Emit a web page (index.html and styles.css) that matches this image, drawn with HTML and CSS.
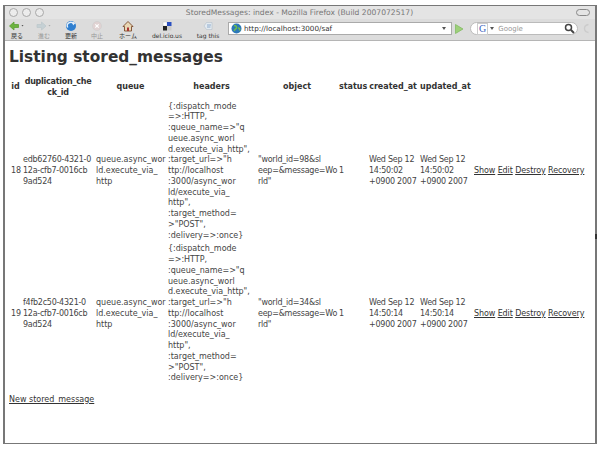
FILE: index.html
```html
<!DOCTYPE html>
<html lang="en">
<head>
    <meta charset="UTF-8">
    <title>StoredMessages: index</title>
    <link rel="stylesheet" href="styles.css">
</head>
<body>

    <div class="window">
        <!-- Title bar -->
        <div class="titlebar">
            <div class="lights">
                <span class="light"></span>
                <span class="light"></span>
                <span class="light"></span>
            </div>
            <div class="window-title">StoredMessages: index - Mozilla Firefox (Build 2007072517)</div>
            <span class="pill"></span>
        </div>

        <!-- Toolbar -->
        <div class="toolbar">
            <div class="tool tool-back">
                <svg width="18" height="12" viewBox="0 0 18 12"><path d="M1.500 6 6 2v2.500h4.500v3H6V10z" fill="#6cb33f" stroke="#5a9e34" stroke-width=".8" stroke-linejoin="round"/><path d="m13.500 5 2 0-1 1.500z" fill="#555"/></svg>
                <span>戻る</span>
            </div>
            <div class="tool tool-forward muted">
                <svg width="18" height="12" viewBox="0 0 18 12"><path d="M11 6 6.500 2v2.500H2v3h4.500V10z" fill="#c5d0d4" stroke="#bcc8cc" stroke-width=".8" stroke-linejoin="round"/><path d="m13.500 5 2 0-1 1.500z" fill="#aaa"/></svg>
                <span>進む</span>
            </div>
            <div class="tool tool-reload">
                <svg width="14" height="12" viewBox="0 0 14 12"><circle cx="7" cy="6" r="5" fill="#2f7fd0"/><path d="M3.800 7.500A3.400 3.400 0 0 1 9.500 3.800" fill="none" stroke="#e6f0fa" stroke-width="1.400"/><path d="M8.500 1.500 11.500 3 9 5.500z" fill="#e6f0fa"/></svg>
                <span>更新</span>
            </div>
            <div class="tool tool-stop muted">
                <svg width="14" height="12" viewBox="0 0 14 12"><circle cx="7" cy="6" r="4.500" fill="#e0d2d2" stroke="#ccc" stroke-width=".6"/><path d="m5.300 4.300 3.400 3.400m0-3.400-3.400 3.400" stroke="#fff" stroke-width="1.200"/></svg>
                <span>中止</span>
            </div>
            <div class="tool tool-home">
                <svg width="14" height="12" viewBox="0 0 14 12"><path d="M7 1.500 2 6.500h1.500V11h7V6.500H12z" fill="#e8d6b4" stroke="#7a4a2a" stroke-width=".9" stroke-linejoin="round"/><path d="M6 7.500h2V11H6z" fill="#a33"/></svg>
                <span>ホーム</span>
            </div>
            <div class="tool tool-delicious">
                <svg width="12" height="12" viewBox="0 0 12 12"><rect x="2" y="2" width="4" height="4" fill="#fff" stroke="#bbb" stroke-width=".4"/><rect x="6" y="2" width="4.500" height="4" fill="#2a4fc0"/><rect x="2" y="6" width="4" height="4.500" fill="#222"/><rect x="6" y="6" width="4.500" height="4.500" fill="#ccc"/></svg>
                <span>del.icio.us</span>
            </div>
            <div class="tool tool-tag">
                <svg width="14" height="12" viewBox="0 0 14 12"><path d="M3 6 5.500 2.500H11v7H5.500z" fill="#e3eaf0" stroke="#b4c0cb" stroke-width=".6"/><path d="M6 5h4M6 7h3.500" stroke="#7a9cc4" stroke-width=".8"/></svg>
                <span>tag this</span>
            </div>
            <div class="urlbar">
                <svg width="11" height="11" viewBox="0 0 11 11"><circle cx="5.500" cy="5.500" r="5" fill="#2c78b8"/><path d="M3 2.500c2 0 3 1 2.500 2.500S3 6 3.500 8M7 5c1.500 0 2 1 1.500 2.500" stroke="#6fc04a" stroke-width="1.500" fill="none"/></svg>
                <span class="url-text">http://localhost:3000/saf</span>
                <span class="url-arrow"></span>
            </div>
            <svg class="go" width="10" height="12" viewBox="0 0 10 12"><path d="M1.500 1.500 9 6l-7.500 4.500z" fill="#9ed07a" stroke="#7ab85a" stroke-width=".7"/></svg>
            <div class="searchbar">
                <span class="engine">G</span>
                <span class="search-arrow"></span>
                <span class="search-text">Google</span>
                <svg class="loupe" width="11" height="11" viewBox="0 0 11 11"><circle cx="4.500" cy="4.500" r="3" fill="none" stroke="#444" stroke-width="1.500"/><path d="m7 7 3 3" stroke="#444" stroke-width="2"/></svg>
            </div>
            <svg class="spinner" width="7" height="11" viewBox="0 0 7 11"><path d="M5.500 1.500C2.500 2 1.500 4 1.500 5.500S2.500 9 5.500 9.500" fill="none" stroke="#ccc" stroke-width="1.400"/></svg>
        </div>

        <!-- Page content -->
        <div class="content">
            <h1>Listing stored_messages</h1>

            <table>
                <colgroup>
                    <col class="col-id">
                    <col class="col-dup">
                    <col class="col-queue">
                    <col class="col-headers">
                    <col class="col-object">
                    <col class="col-status">
                    <col class="col-date">
                    <col class="col-date">
                    <col class="col-actions">
                </colgroup>
                <tr>
                    <th>id</th>
                    <th class="tight">duplication_che<br>ck_id</th>
                    <th>queue</th>
                    <th>headers</th>
                    <th>object</th>
                    <th>status</th>
                    <th>created_at</th>
                    <th>updated_at</th>
                    <th></th>
                </tr>
                <tr>
                    <td>18</td>
                    <td class="tight">edb62760-4321-0<br>12a-cfb7-0016cb<br>9ad524</td>
                    <td>queue.async_wor<br>ld.execute_via_<br>http</td>
                    <td>{:dispatch_mode<br>=&gt;:HTTP,<br>:queue_name=&gt;"q<br>ueue.async_worl<br>d.execute_via_http",<br>:target_url=&gt;"h<br>ttp://localhost<br>:3000/async_wor<br>ld/execute_via_<br>http",<br>:target_method=<br>&gt;"POST",<br>:delivery=&gt;:once}</td>
                    <td class="tight">"world_id=98&amp;sl<br>eep=&amp;message=Wo<br>rld"</td>
                    <td>1</td>
                    <td class="tight">Wed Sep 12<br>14:50:02<br>+0900 2007</td>
                    <td class="tight">Wed Sep 12<br>14:50:02<br>+0900 2007</td>
                    <td class="actions"><a href="#">Show</a> <a href="#">Edit</a> <a href="#">Destroy</a> <a href="#">Recovery</a></td>
                </tr>
                <tr>
                    <td>19</td>
                    <td class="tight">f4fb2c50-4321-0<br>12a-cfb7-0016cb<br>9ad524</td>
                    <td>queue.async_wor<br>ld.execute_via_<br>http</td>
                    <td>{:dispatch_mode<br>=&gt;:HTTP,<br>:queue_name=&gt;"q<br>ueue.async_worl<br>d.execute_via_http",<br>:target_url=&gt;"h<br>ttp://localhost<br>:3000/async_wor<br>ld/execute_via_<br>http",<br>:target_method=<br>&gt;"POST",<br>:delivery=&gt;:once}</td>
                    <td class="tight">"world_id=34&amp;sl<br>eep=&amp;message=Wo<br>rld"</td>
                    <td>1</td>
                    <td class="tight">Wed Sep 12<br>14:50:14<br>+0900 2007</td>
                    <td class="tight">Wed Sep 12<br>14:50:14<br>+0900 2007</td>
                    <td class="actions"><a href="#">Show</a> <a href="#">Edit</a> <a href="#">Destroy</a> <a href="#">Recovery</a></td>
                </tr>
            </table>

            <p class="new-link"><a href="#">New stored_message</a></p>
        </div>

        <span class="edge-mark"></span>
    </div>

</body>
</html>
```
FILE: styles.css
```css
/* General Styling */
html, body {
    height: 100%;
}

body {
    margin: 0;
    padding: 5px 3px 6px 3px;
    box-sizing: border-box;
    background: #fff;
    color: #444;
    font-family: "DejaVu Sans", Verdana, "Noto Sans CJK JP", sans-serif;
}

.window {
    position: relative;
    height: 100%;
    box-sizing: border-box;
    border: 1px solid #777;
    border-left-width: 2px;
    border-right-width: 2px;
    display: flex;
    flex-direction: column;
    background: #fff;
}

.edge-mark {
    position: absolute;
    top: 228px;
    right: -2px;
    width: 2px;
    height: 5px;
    background: #333;
}

/* Title bar */
.titlebar {
    height: 13px;
    display: grid;
    grid-template-columns: 1fr auto 1fr;
    align-items: center;
    padding: 0 5px 0 4px;
    background: #e4e4e4;
}

.lights {
    display: flex;
    gap: 4px;
}

.light {
    width: 9px;
    height: 9px;
    box-sizing: border-box;
    border: 1px solid #a8a8a8;
    border-radius: 50%;
    background: #ececec;
}

.window-title {
    font-size: 7.6px;
    color: #777;
}

.pill {
    justify-self: end;
    width: 12px;
    height: 5px;
    border: 1px solid #888;
    border-radius: 4px;
}

/* Toolbar */
.toolbar {
    height: 22px;
    box-sizing: border-box;
    display: flex;
    align-items: center;
    background: #dcdcdc;
    border-bottom: 1px solid #b5b5b5;
}

.tool {
    display: flex;
    flex-direction: column;
    align-items: center;
    font-size: 6px;
    line-height: 8px;
    color: #333;
}

.tool.muted {
    color: #999;
}

.tool-back { width: 24px; }
.tool-forward { width: 30px; }
.tool-reload { width: 24px; }
.tool-stop { width: 28px; }
.tool-home { width: 34px; }
.tool-delicious { width: 44px; }
.tool-tag { width: 38px; }

.urlbar {
    width: 224px;
    height: 13px;
    box-sizing: border-box;
    margin: 0 0 2px 1px;
    padding: 0 5px 0 2px;
    display: flex;
    align-items: center;
    gap: 2px;
    background: #fff;
    border: 1px solid #aaa;
}

.url-text {
    flex: 1;
    font-size: 7.2px;
    color: #333;
}

.url-arrow,
.search-arrow {
    border-left: 2px solid transparent;
    border-right: 2px solid transparent;
    border-top: 3px solid #555;
}

.go {
    margin: 0 0 2px 2px;
}

.searchbar {
    width: 108px;
    height: 13px;
    box-sizing: border-box;
    margin: 0 0 2px 6px;
    padding: 0 2px 0 6px;
    display: flex;
    align-items: center;
    gap: 2px;
    background: #fff;
    border: 1px solid #bbb;
    border-radius: 7px;
}

.engine {
    font-family: "Liberation Serif", serif;
    font-size: 10px;
    line-height: 10px;
    color: #3a5fc0;
    border: 1px solid #ccc;
    padding: 0 1px;
}

.search-text {
    flex: 1;
    margin-left: 2px;
    font-size: 7px;
    color: #999;
}

.spinner {
    margin: 0 0 2px 5px;
}

/* Page content */
.content {
    flex: 1;
    padding: 6px 4px;
}

h1 {
    margin: 0 0 7px;
    font-size: 15.4px;
    line-height: 21px;
    font-weight: bold;
    color: #333;
}

table {
    table-layout: fixed;
    width: 578px;
    border-collapse: separate;
    border-spacing: 1px;
    font-size: 8px;
    line-height: 10.75px;
}

.col-id { width: 11px; }
.col-dup { width: 72px; }
.col-queue { width: 71px; }
.col-headers { width: 89px; }
.col-object { width: 80px; }
.col-status { width: 29px; }
.col-date { width: 50px; }
.col-actions { width: 116px; }

th {
    font-weight: bold;
    text-align: center;
    vertical-align: middle;
    padding: 1px;
    color: #333;
    white-space: nowrap;
}

td {
    vertical-align: middle;
    padding: 1px;
    white-space: nowrap;
}

.tight {
    letter-spacing: -0.25px;
}

.actions {
    padding-left: 4px;
    letter-spacing: -0.1px;
}

a {
    color: #333;
}

.new-link {
    margin: 8px 0 0;
    font-size: 8px;
    line-height: 11px;
}
```
